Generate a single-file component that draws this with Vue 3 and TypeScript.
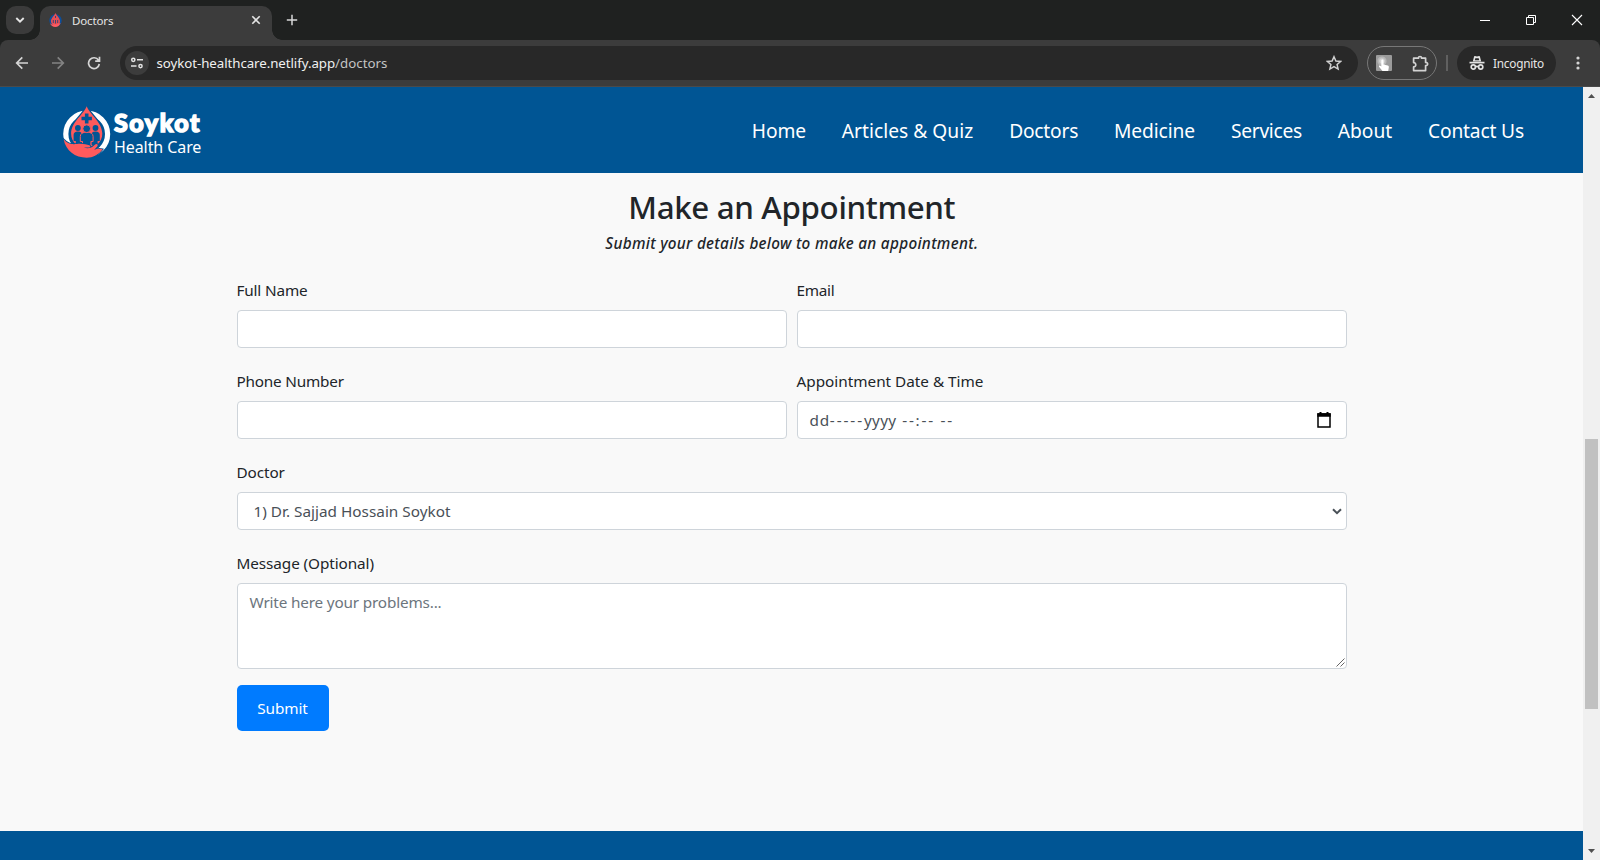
<script setup lang="ts">
import { ref } from 'vue'
import type { Directive } from 'vue'

// Spreads the letters of a label evenly so that it takes the given width.
const vFit: Directive<HTMLElement, number> = {
  mounted(el, { value }) {
    const natural = el.getBoundingClientRect().width
    const count = (el.textContent ?? '').length
    el.style.letterSpacing = `${(value - natural) / count}px`
  },
}

interface NavLink { text: string; width: number }

const links: NavLink[] = [
  { text: 'Home', width: 54 },
  { text: 'Articles & Quiz', width: 131.5 },
  { text: 'Doctors', width: 69 },
  { text: 'Medicine', width: 81 },
  { text: 'Services', width: 71 },
  { text: 'About', width: 54.3 },
  { text: 'Contact Us', width: 96 },
]

const fullName = ref('')
const email = ref('')
const phone = ref('')
</script>

<template>
  <div class="window">
    <div class="tabstrip">
      <div class="tab-search">
        <svg width="10" height="6" viewBox="0 0 10 6"><path d="M1.3 1 5 4.6 8.7 1" fill="none" stroke="#e6e6e6" stroke-width="1.9" /></svg>
      </div>
      <div class="tab">
        <svg class="favicon" width="13" height="14" viewBox="0 0 13 14">
          <circle cx="6.500" cy="7.500" r="5.200" fill="none" stroke="#0b4f9c" stroke-width="2" />
          <path d="M6.500 0C7.600 2.600 11 5 11 8.200a4.500 4.500 0 0 1-9 0C2 5 5.400 2.600 6.500 0Z" fill="#e84e55" />
          <path d="M1 10.200c2 2.200 5 .6 7 1.200 1.500-.8 2.500-1 3.600-1.400C10.500 12.700 8.700 13.900 6.400 13.900 4 13.900 1.800 12.500 1 10.200Z" fill="#ff5a5f" />
          <path d="M4.300 7v3M6.500 7v3.500M8.700 7v3M6.500 3v2" stroke="#3d4471" />
        </svg>
        <span v-fit="41.300" class="tab-title">Doctors</span>
        <svg class="tab-close" width="10" height="10" viewBox="0 0 10 10"><path d="M1.300 1.300 8.700 8.700M8.700 1.300 1.300 8.700" stroke="#e3e3e3" stroke-width="1.600" /></svg>
      </div>
      <svg class="new-tab" width="12" height="12" viewBox="0 0 12 12"><path d="M6 .8v10.400M.8 6h10.400" stroke="#d8d8d8" stroke-width="1.500" /></svg>
      <div class="controls">
        <svg width="12" height="12" viewBox="0 0 12 12"><path d="M1 6.500h10" stroke="#fff" /></svg>
        <svg width="12" height="12" viewBox="0 0 12 12"><path d="M1.500 3.500h7v7h-7zM3.500 3.500v-2h7v7h-2" fill="none" stroke="#fff" /></svg>
        <svg width="12" height="12" viewBox="0 0 12 12"><path d="m1 1 10 10M11 1 1 11" stroke="#fff" stroke-width="1.100" /></svg>
      </div>
    </div>

    <div class="toolbar-back">
      <div class="toolbar">
        <div class="history">
          <svg width="14" height="14" viewBox="0 0 14 14"><path d="M13 7H2M7.300 1.400 1.700 7l5.600 5.600" fill="none" stroke="#d5d5d5" stroke-width="1.700" /></svg>
          <svg width="14" height="14" viewBox="0 0 14 14"><path d="M1 7h11M6.700 1.400 12.300 7l-5.600 5.600" fill="none" stroke="#838383" stroke-width="1.700" /></svg>
          <svg width="14" height="14" viewBox="0 0 14 14"><path d="M11.500 4.200A5.400 5.400 0 1 0 12.300 8M12.500 .8v4.300H8.200" fill="none" stroke="#d5d5d5" stroke-width="1.700" /></svg>
        </div>
        <div class="omnibox">
          <div class="site-info">
            <svg width="14" height="12" viewBox="0 0 14 12"><g fill="none" stroke="#e3e3e3" stroke-width="1.500"><circle cx="3.300" cy="2.800" r="1.600" /><path d="M7 2.800h6M1 9.100h5.500" /><circle cx="10.500" cy="9.100" r="1.600" /></g></svg>
          </div>
          <span class="url"><span v-fit="178.500" class="host">soykot-healthcare.netlify.app</span><span v-fit="52.500" class="path">/doctors</span></span>
          <svg class="star" width="16" height="16" viewBox="0 0 16 16"><path d="m8 1.700 1.900 4.300 4.700.45-3.500 3.100 1 4.550L8 11.700l-4.100 2.400 1-4.550-3.500-3.100L6.100 6Z" fill="none" stroke="#d0d0d0" stroke-width="1.500" /></svg>
        </div>
        <div class="extensions">
          <svg width="16" height="16" viewBox="0 0 16 16">
            <rect width="16" height="16" rx="1" fill="#9b9b9b" />
            <circle cx="6" cy="6" r="4.600" fill="#b8b8b8" />
            <circle cx="6" cy="6" r="2.800" fill="#d3d3d3" />
            <path d="M5.300 5.500c0-1.500 2.200-1.500 2.200 0v4l4.200 1c1 .3 1.300 1 1.100 2l-.6 3.500H6.500L3.200 12c-.8-1.200.3-1.900 1.200-1.200l.9.700Z" fill="#fff" />
          </svg>
          <svg width="17" height="17" viewBox="0 0 17 17"><path d="M1.600 3.200h4.900c-.3-2.300 3.300-2.300 3 0h4.100v4.200c2.700-.2 2.700 3.400 0 3.200v5H1.600v-3.700c2.900.2 2.900-4.400 0-4.200Z" fill="none" stroke="#d3d3d3" stroke-width="1.700" stroke-linejoin="round" /></svg>
        </div>
        <div class="divider"></div>
        <div class="incognito">
          <svg width="16" height="16" viewBox="0 0 16 16">
            <path d="M3.800 6.600 5.100 1.500q.2-.7.900-.5l2 .5 2-.5q.7-.2.900.5l1.300 5.100Z" fill="#e3e3e3" />
            <path d="M6.300 3.200h3.400l.5 2H5.800Z" fill="#282828" />
            <path d="M.5 7.600h15" stroke="#e3e3e3" stroke-width="1.700" />
            <g fill="none" stroke="#e3e3e3" stroke-width="1.700"><circle cx="4.300" cy="12" r="2.100" /><circle cx="11.700" cy="12" r="2.100" /><path d="M6.400 11.700q1.600-.8 3.200 0" /></g>
          </svg>
          <span v-fit="51" class="incognito-text">Incognito</span>
        </div>
        <svg class="menu" width="4" height="14" viewBox="0 0 4 14"><g fill="#d5d5d5"><circle cx="2" cy="2" r="1.600" /><circle cx="2" cy="7" r="1.600" /><circle cx="2" cy="12" r="1.600" /></g></svg>
      </div>
    </div>

    <div class="viewport">
      <div class="page">
        <header class="navbar">
          <div class="brand">
            <svg width="48" height="52" viewBox="0 0 48 52">
              <circle cx="23.700" cy="28" r="20.900" fill="none" stroke="#fff" stroke-width="5.200" />
              <path d="M23.700.2C26.500 8.300 39.300 16 39.300 27.500 39.300 36.500 32.300 42 23.700 42S8.100 36.500 8.100 27.500C8.100 16 20.900 8.300 23.700.2Z" fill="#ff5a5c" stroke="#005594" stroke-width="2.400" paint-order="stroke" />
              <path d="M21.900 7.500h3.600v3.200h3.400v3.600h-3.400v3.200h-3.600v-3.200h-3.400v-3.600h3.400Z" fill="#005594" />
              <g fill="#005594">
                <circle cx="14.900" cy="22" r="2.900" /><circle cx="32.500" cy="22" r="2.900" />
                <path d="M10.600 35V29q0-3.500 4.300-3.500T19 29v10h-6.200v-4Z" />
                <path d="M36.800 35V29q0-3.500-4.300-3.500T28.400 29v10h6.200v-4Z" />
                <g stroke="#ff5a5c" stroke-width="1">
                  <path d="M17.300 35.500V30.500q0-4.300 6.400-4.300t6.400 4.300v5h-2.200v6.500h-8.400v-6.500Z" />
                  <circle cx="23.700" cy="22.700" r="3.900" />
                </g>
              </g>
              <path d="M.6 33.300c4.300 4.900 8.200 5.200 13.400 4.700 5.500-.5 9.500.5 12.200 1.200 1.800.6 1.200 2.400-.6 2.400h-4.800c4.800 1.500 7.700.2 10.800-2.700 1.900-1.800 4.200-.6 2.600 1.500l-3 3.300c2.100-.5 4.200-1.600 8.400-.5-3.900 5.500-9.900 8.500-15.900 8.500C12 51.700 3 45 .6 33.300Z" fill="#ff5a5c" stroke="#005594" stroke-width="1.600" paint-order="stroke" />
            </svg>
            <div class="brand-words">
              <span v-fit="87" class="brand-name">Soykot</span>
              <span v-fit="87.300" class="brand-sub">Health Care</span>
            </div>
          </div>
          <nav class="links">
            <a v-for="link in links" :key="link.text" v-fit="link.width" class="link">{{ link.text }}</a>
          </nav>
        </header>

        <main class="content">
          <h2 class="heading"><span v-fit="327">Make an Appointment</span></h2>
          <p class="subheading"><span v-fit="373">Submit your details below to make an appointment.</span></p>
          <form class="form" @submit.prevent>
            <div class="row">
              <div class="group">
                <label><span v-fit="71">Full Name</span></label>
                <input v-model="fullName" class="control" type="text" />
              </div>
              <div class="group">
                <label><span v-fit="38">Email</span></label>
                <input v-model="email" class="control" type="email" />
              </div>
            </div>
            <div class="row">
              <div class="group">
                <label><span v-fit="107.300">Phone Number</span></label>
                <input v-model="phone" class="control" type="tel" />
              </div>
              <div class="group">
                <label><span v-fit="187">Appointment Date &amp; Time</span></label>
                <div class="control date">
                  <span class="date-text"><span v-fit="20.300">dd</span><span v-fit="34.200">-----</span><span v-fit="32.500">yyyy</span><span v-fit="57.500">&nbsp;--:--&nbsp;--</span></span>
                  <svg width="14" height="16" viewBox="0 0 14 16"><path d="M1 2h12v13H1z" fill="none" stroke="#000" stroke-width="1.500" /><path d="M.3 1.300h13.400V4.800H.3zM2.500 0h2v2h-2zM9.500 0h2v2h-2z" /></svg>
                </div>
              </div>
            </div>
            <div class="group">
              <label><span v-fit="48.300">Doctor</span></label>
              <div class="control select">
                <span v-fit="197">1) Dr. Sajjad Hossain Soykot</span>
                <svg width="10" height="7" viewBox="0 0 10 7"><path d="M1 1.200 5 5.200 9 1.200" fill="none" stroke="#495057" stroke-width="2" /></svg>
              </div>
            </div>
            <div class="group message">
              <label><span v-fit="137.500">Message (Optional)</span></label>
              <div class="control textarea">
                <span v-fit="192">Write here your problems...</span>
                <svg class="grip" width="9" height="9" viewBox="0 0 9 9"><path d="M.5 8.500l8-8M4.500 8.500l4-4" stroke="#555" stroke-width=".9" /></svg>
              </div>
            </div>
            <button class="submit" type="submit"><span v-fit="50.500">Submit</span></button>
          </form>
        </main>
        <footer class="footer"></footer>
      </div>

      <div class="scrollbar">
        <svg width="7" height="4" viewBox="0 0 7 4"><path d="M0 4 3.500 0 7 4Z" fill="#505050" /></svg>
        <div class="thumb"></div>
        <svg width="7" height="4" viewBox="0 0 7 4"><path d="M0 0 3.500 4 7 0Z" fill="#505050" /></svg>
      </div>
    </div>
  </div>
</template>

<style>
html,
body {
  margin: 0;
  overflow: hidden;
}
</style>

<style scoped>
* {
  box-sizing: border-box;
}
.window {
  width: 1600px;
  height: 860px;
  display: flex;
  flex-direction: column;
  font-family: "Noto Sans", "Open Sans", sans-serif;
  font-size: 15.300px;
  font-weight: 400;
  line-height: 24px;
  color: #212529;
  white-space: nowrap;
}
svg {
  display: block;
  flex: none;
}
span,
a {
  flex: none;
}
.tabstrip {
  height: 40px;
  display: flex;
  align-items: flex-start;
  padding: 6px 17px 0 6px;
  background: #1f2120;
}
.tab-search {
  width: 28px;
  height: 28px;
  border-radius: 10px;
  background: #3b3b3b;
  display: flex;
  align-items: center;
  justify-content: center;
}
.tab {
  position: relative;
  width: 232px;
  height: 34px;
  margin-left: 6px;
  padding: 0 11px 6px 9px;
  border-radius: 10px 10px 0 0;
  background: #3c3c3c;
  display: flex;
  align-items: center;
}
.tab::before,
.tab::after {
  content: "";
  position: absolute;
  bottom: 0;
  width: 10px;
  height: 10px;
}
.tab::before {
  left: -10px;
  background: radial-gradient(circle at 0 0, transparent 9.500px, #3c3c3c 10px);
}
.tab::after {
  right: -10px;
  background: radial-gradient(circle at 100% 0, transparent 9.500px, #3c3c3c 10px);
}
.tab-title {
  margin-left: 10px;
  font-size: 11.500px;
  color: #e6e6e6;
  padding-top: 1px;
}
.tab-close {
  margin-left: auto;
}
.new-tab {
  margin: 8px 0 0 14px;
}
.controls {
  display: flex;
  gap: 34px;
  margin: 8px 0 0 auto;
}
.toolbar-back {
  background: #1f2120;
}
.toolbar {
  height: 47px;
  border-bottom: 1px solid #4a4a4a;
  border-radius: 8px 8px 0 0;
  background: #3c3c3c;
  display: flex;
  align-items: center;
  padding: 0 20px 0 15px;
}
.history {
  display: flex;
  gap: 22px;
  margin-right: 19px;
}
.omnibox {
  width: 1238px;
  height: 34px;
  border-radius: 17px;
  background: #282828;
  display: flex;
  align-items: center;
  padding: 0 16px 0 5px;
}
.site-info {
  width: 24px;
  height: 24px;
  border-radius: 50%;
  background: #3c3c3c;
  display: flex;
  align-items: center;
  justify-content: center;
}
.url {
  display: flex;
  margin-left: 7.500px;
  font-size: 13.300px;
  color: #f0f0f0;
}
.path {
  color: #c4c4c4;
}
.star {
  margin-left: auto;
}
.extensions {
  width: 70px;
  height: 34px;
  margin-left: 9px;
  padding: 0 7px 0 8px;
  border: 1px solid #777;
  border-radius: 17px;
  display: flex;
  align-items: center;
  justify-content: space-between;
}
.divider {
  width: 2px;
  height: 16px;
  margin: 0 9px;
  background: #606060;
}
.incognito {
  width: 99px;
  height: 34px;
  border-radius: 17px;
  background: #282828;
  display: flex;
  align-items: center;
  padding-left: 12px;
}
.incognito-text {
  margin-left: 8px;
  font-size: 11.800px;
  color: #e6e6e6;
}
.menu {
  margin-left: auto;
}
.viewport {
  flex: 1;
  display: flex;
  min-height: 0;
}
.page {
  width: 1583px;
  display: flex;
  flex-direction: column;
  background: #f9f9f9;
}
.navbar {
  height: 86px;
  background: #005594;
  display: flex;
  justify-content: space-between;
  padding: 0 59px 0 63px;
  color: #fff;
}
.brand {
  display: flex;
  margin-top: 18.500px;
}
.brand-words {
  display: flex;
  flex-direction: column;
  align-items: flex-start;
  margin-left: 3px;
}
.brand-name {
  margin-top: 3px;
  height: 26px;
  font-family: Lato, "Open Sans", sans-serif;
  font-weight: 900;
  font-size: 25px;
  line-height: 27px;
  -webkit-text-stroke: 1.500px #fff;
}
.brand-sub {
  margin-top: 1px;
  font-size: 16px;
  line-height: 22px;
}
.links {
  display: flex;
  gap: 35.900px;
  margin-top: 30px;
  height: 28px;
}
.link {
  font-size: 19.200px;
  line-height: 28px;
}
.content {
  flex: 1;
  padding: 15px 236px 0 236.500px;
}
.heading {
  margin: 0;
  height: 43px;
  display: flex;
  justify-content: center;
  font-size: 31.300px;
  line-height: 38px;
  font-weight: 460;
}
.subheading {
  margin: 0;
  height: 47px;
  display: flex;
  justify-content: center;
  font-style: italic;
  font-weight: 500;
}
.form {
  display: flex;
  flex-direction: column;
  align-items: stretch;
}
.row {
  display: grid;
  grid-template-columns: 550px 550px;
  gap: 10px;
}
.group {
  display: flex;
  flex-direction: column;
  margin-bottom: 21px;
}
.group label {
  display: flex;
  margin-bottom: 8px;
}
.control {
  width: 100%;
  height: 38px;
  padding: 0 12px;
  border: 1px solid #ced4da;
  border-radius: 4px;
  background: #fff;
  color: #495057;
  font: inherit;
  outline: none;
}
.date,
.select {
  display: flex;
  align-items: center;
  justify-content: space-between;
}
.date {
  padding-right: 15px;
}
.date-text {
  display: flex;
}
.select {
  padding: 0 4px 0 16px;
}
.textarea {
  position: relative;
  height: 86px;
  padding-top: 6px;
  color: #6c757d;
}
.grip {
  position: absolute;
  right: 1px;
  bottom: 1px;
}
.message {
  margin-bottom: 16px;
}
.submit {
  width: 92px;
  height: 46px;
  padding: 0;
  border: 0;
  border-radius: 5px;
  background: #007bff;
  color: #fff;
  font: inherit;
}
.footer {
  height: 29px;
  background: #005594;
}
.scrollbar {
  width: 17px;
  background: #f0f0f0;
  display: flex;
  flex-direction: column;
  align-items: center;
  padding: 7px 0;
}
.thumb {
  width: 13px;
  height: 270px;
  margin: 341px 0 auto;
  background: #c1c1c1;
}
</style>
